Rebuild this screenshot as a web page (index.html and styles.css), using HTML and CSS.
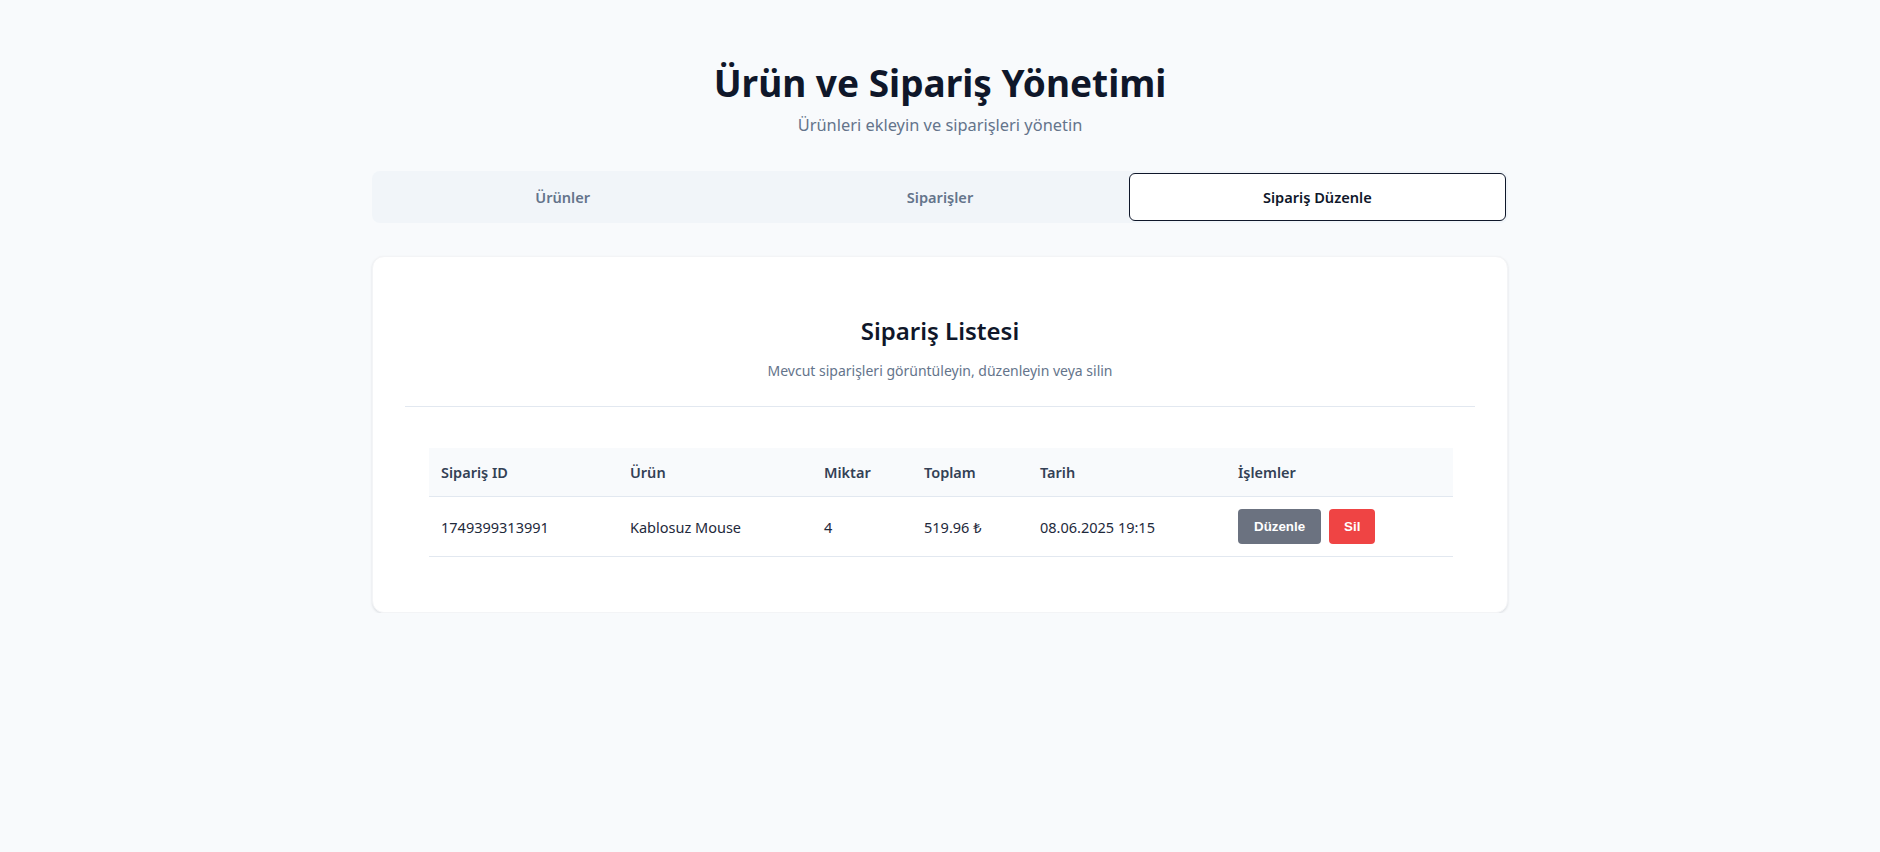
FILE: index.html
```html
<!DOCTYPE html>
<html lang="tr">
<head>
<meta charset="utf-8">
<title>Ürün ve Sipariş Yönetimi</title>
<link rel="stylesheet" href="styles.css">
</head>
<body>
<div class="page">
  <header class="page-head">
    <h1 class="page-title">Ürün ve Sipariş Yönetimi</h1>
    <p class="page-sub">Ürünleri ekleyin ve siparişleri yönetin</p>
  </header>

  <nav class="tabs">
    <button class="tab">Ürünler</button>
    <button class="tab">Siparişler</button>
    <button class="tab tab-active">Sipariş Düzenle</button>
  </nav>

  <section class="card">
    <div class="card-head">
      <h2 class="card-title">Sipariş Listesi</h2>
      <p class="card-desc">Mevcut siparişleri görüntüleyin, düzenleyin veya silin</p>
    </div>
    <div class="card-body">
      <table class="orders">
        <colgroup>
          <col class="c-id"><col class="c-prod"><col class="c-qty"><col class="c-total"><col class="c-date"><col class="c-act">
        </colgroup>
        <thead>
          <tr>
            <th>Sipariş ID</th>
            <th>Ürün</th>
            <th>Miktar</th>
            <th>Toplam</th>
            <th>Tarih</th>
            <th>İşlemler</th>
          </tr>
        </thead>
        <tbody>
          <tr>
            <td>1749399313991</td>
            <td>Kablosuz Mouse</td>
            <td>4</td>
            <td>519.96 ₺</td>
            <td>08.06.2025 19:15</td>
            <td>
              <div class="actions">
                <button class="btn btn-edit">Düzenle</button>
                <button class="btn btn-del">Sil</button>
              </div>
            </td>
          </tr>
        </tbody>
      </table>
    </div>
  </section>
</div>
</body>
</html>
```

FILE: styles.css
```css
* { box-sizing: border-box; }

html, body {
  margin: 0;
  padding: 0;
  background: #f8fafc;
  font-family: "Noto Sans", "Open Sans", sans-serif;
  color: #0f172a;
}

.page {
  width: 1136px;
  margin: 0 auto;
  padding-top: 63px;
}

.page-head {
  text-align: center;
}

.page-title {
  margin: 0;
  font-size: 37px;
  line-height: 40px;
  font-weight: 700;
  color: #0f172a;
}

.page-sub {
  margin: 8px 0 0;
  font-size: 16.4px;
  line-height: 28px;
  color: #64748b;
}

.tabs {
  margin-top: 32px;
  display: grid;
  grid-template-columns: 1fr 1fr 1fr;
  padding: 2px;
  height: 52px;
  background: #f1f5f9;
  border-radius: 8px;
}

.tab {
  font-family: "Noto Sans", "Open Sans", sans-serif;
  font-size: 14.6px;
  font-weight: 600;
  color: #64748b;
  background: transparent;
  border: 1px solid transparent;
  border-radius: 6px;
  padding: 0;
  cursor: pointer;
}

.tab-active {
  background: #ffffff;
  color: #0f172a;
  border-color: #0f172a;
}

.card {
  margin-top: 33px;
  background: #ffffff;
  border-radius: 12px;
  border: 1px solid #f3f4f6;
  box-shadow: 0 1px 3px rgba(15, 23, 42, 0.08), 0 1px 2px rgba(15, 23, 42, 0.04);
  padding: 0 32px 32px;
}

.card-head {
  text-align: center;
  padding: 58px 0 25px;
  border-bottom: 1px solid #e2e8f0;
}

.card-title {
  margin: 0;
  font-size: 24px;
  line-height: 32px;
  font-weight: 600;
  color: #0f172a;
}

.card-desc {
  margin: 14px 0 0;
  font-size: 14px;
  line-height: 20px;
  color: #64748b;
}

.card-body {
  padding: 41px 24px 23px;
}

.orders {
  width: 100%;
  border-collapse: collapse;
  table-layout: fixed;
  font-size: 14.5px;
}

.c-id { width: 189px; }
.c-prod { width: 194px; }
.c-qty { width: 100px; }
.c-total { width: 116px; }
.c-date { width: 198px; }
.c-act { width: 227px; }

.orders th {
  text-align: left;
  font-weight: 600;
  color: #334155;
  background: #f8fafc;
  padding: 12px;
  line-height: 24px;
  border-bottom: 1px solid #e2e8f0;
}

.orders td {
  padding: 12px;
  line-height: 24px;
  color: #1e293b;
  border-bottom: 1px solid #e2e8f0;
  white-space: nowrap;
  vertical-align: middle;
}

.actions {
  display: flex;
  gap: 8px;
}

.btn {
  font-family: "Liberation Sans", Arial, sans-serif;
  font-size: 13.33px;
  font-weight: 700;
  color: #ffffff;
  border: none;
  border-radius: 4px;
  padding: 10px 16px;
  line-height: 15px;
  cursor: pointer;
}

.btn-edit { background: #6b7280; }
.btn-del { background: #ef4444; padding: 10px 15px; }
```
